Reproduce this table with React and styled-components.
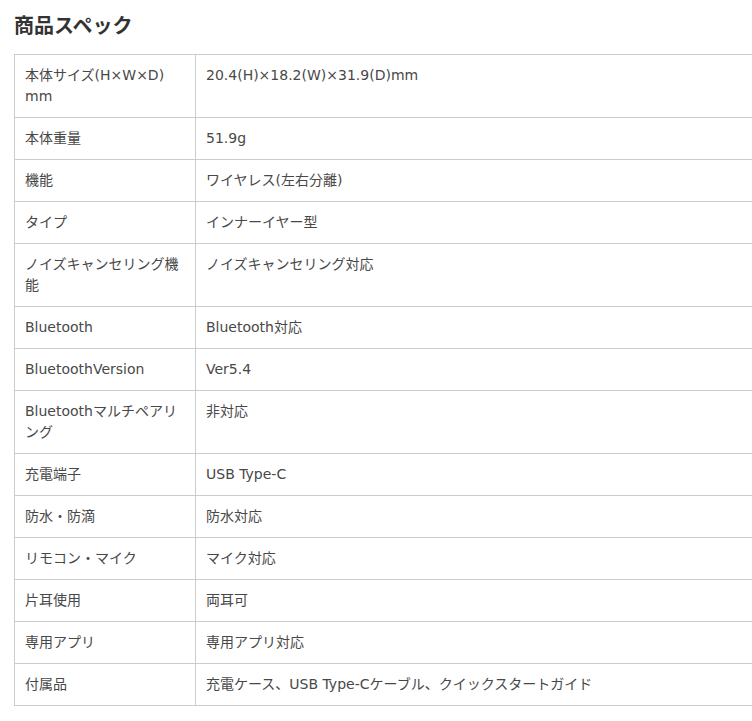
import styled, { createGlobalStyle } from 'styled-components';

const specs = [
  { label: ['本体サイズ(H×W×D)', 'mm'], value: '20.4(H)×18.2(W)×31.9(D)mm' },
  { label: ['本体重量'], value: '51.9g' },
  { label: ['機能'], value: 'ワイヤレス(左右分離)' },
  { label: ['タイプ'], value: 'インナーイヤー型' },
  { label: ['ノイズキャンセリング機', '能'], value: 'ノイズキャンセリング対応' },
  { label: ['Bluetooth'], value: 'Bluetooth対応' },
  { label: ['BluetoothVersion'], value: 'Ver5.4' },
  { label: ['Bluetoothマルチペアリ', 'ング'], value: '非対応' },
  { label: ['充電端子'], value: 'USB Type-C' },
  { label: ['防水・防滴'], value: '防水対応' },
  { label: ['リモコン・マイク'], value: 'マイク対応' },
  { label: ['片耳使用'], value: '両耳可' },
  { label: ['専用アプリ'], value: '専用アプリ対応' },
  { label: ['付属品'], value: '充電ケース、USB Type-Cケーブル、クイックスタートガイド' },
];

export default function App() {
  return (
    <>
      <GlobalStyle />
      <Page>
        <Title>商品スペック</Title>
        <TableWrap>
          <SpecTable>
            <tbody>
              {specs.map((s) => (
                <tr key={s.label.join('')}>
                  <LabelCell>
                    {s.label.map((line, i) => (
                      <span key={i}>
                        {i > 0 && <br />}
                        {line}
                      </span>
                    ))}
                  </LabelCell>
                  <ValueCell>{s.value}</ValueCell>
                </tr>
              ))}
            </tbody>
          </SpecTable>
        </TableWrap>
      </Page>
    </>
  );
}

const GlobalStyle = createGlobalStyle`
  html, body {
    margin: 0;
    padding: 0;
    overflow: hidden;
    background: #ffffff;
  }

  body {
    font-family: 'DejaVu Sans', 'Noto Sans CJK JP', sans-serif;
    color: #333333;
  }
`;

const Page = styled.div`
  width: 752px;
  padding-top: 13px;
  padding-left: 14px;
  box-sizing: border-box;
  overflow: hidden;
`;

const Title = styled.h2`
  margin: 0;
  height: 24px;

  font-family: 'Noto Sans CJK JP', sans-serif;
  font-weight: 700;
  font-size: 20px;
  line-height: 24px;
  color: #333333;
`;

const TableWrap = styled.div`
  margin-top: 17px;
  width: 760px;
`;

const SpecTable = styled.table`
  width: 760px;
  border-collapse: collapse;
  table-layout: fixed;

  td {
    border: 1px solid #cccccc;
    padding: 10px 10px;
    vertical-align: top;

    font-family: 'DejaVu Sans', 'Noto Sans CJK JP', sans-serif;
    font-size: 14px;
    line-height: 21px;
    color: #484848;
  }
`;

const LabelCell = styled.td`
  width: 160px;
  white-space: nowrap;
`;

const ValueCell = styled.td`
  white-space: nowrap;
`;
